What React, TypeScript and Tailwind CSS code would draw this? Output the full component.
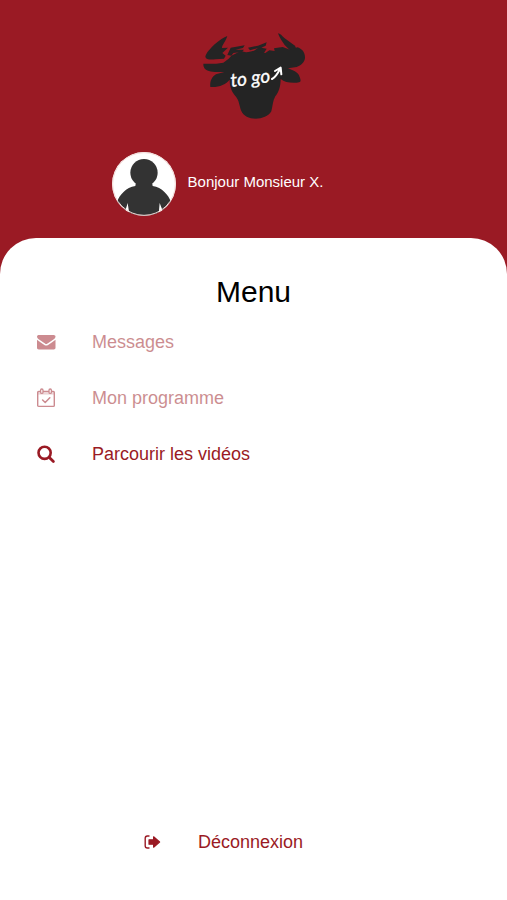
import type { ReactNode } from "react";

type MenuItem = {
  label: string;
  icon: ReactNode;
  active?: boolean;
};

function EnvelopeIcon() {
  return (
    <svg viewBox="0 0 20 20" className="size-5" fill="currentColor" aria-hidden="true">
      <path d="M1 4.500 C1 3.500 2 3 3 3 H17 C18.500 3 19.500 3.500 19.500 4.500 C19.500 5.700 18.800 6.500 17.800 7.200 L12.300 11 C11.500 11.500 11 12 10.200 12 C9.500 12 9 11.500 8.200 11 L2.700 7.200 C1.800 6.600 1 5.500 1 4.500 Z" />
      <path d="M1 7.700 C3 9.300 5 10.500 7.300 12.200 C8.300 12.900 9.200 13.500 10.200 13.500 C11.300 13.500 12.200 12.900 13.200 12.200 C15.500 10.500 17.500 9.300 19.500 7.700 V15.800 C19.500 16.900 18.700 17.500 17.800 17.500 H2.800 C1.800 17.500 1 16.900 1 15.800 Z" />
    </svg>
  );
}

function CalendarIcon() {
  return (
    <svg
      viewBox="0 0 20 20"
      className="size-5"
      fill="none"
      stroke="currentColor"
      strokeLinecap="round"
      strokeLinejoin="round"
      aria-hidden="true"
    >
      <rect x="1.700" y="3.400" width="16.600" height="15" rx="1" strokeWidth="1.400" />
      <path d="M1.700 3.400 H18.300 V6.600 H1.700 Z" fill="currentColor" fillOpacity="0.350" stroke="none" />
      <rect x="4.600" y="1" width="2.400" height="4.400" rx="1.200" fill="white" strokeWidth="1.300" />
      <rect x="13" y="1" width="2.400" height="4.400" rx="1.200" fill="white" strokeWidth="1.300" />
      <path d="M6.600 12 L9.200 14.500 L13.800 9.800" strokeWidth="1.500" />
    </svg>
  );
}

function SearchIcon() {
  return (
    <svg
      viewBox="0 0 20 20"
      className="size-5"
      fill="none"
      stroke="currentColor"
      strokeLinecap="round"
      aria-hidden="true"
    >
      <circle cx="8.600" cy="8.800" r="6.100" strokeWidth="2.600" />
      <path d="M13.600 13.800 L17.400 17.600" strokeWidth="2.800" />
    </svg>
  );
}

function SignOutIcon() {
  return (
    <svg viewBox="0 0 18 16" className="h-4 w-[18px]" aria-hidden="true">
      <path
        d="M5 2 H3.400 C2 2 1.200 2.900 1.200 4.200 V11.800 C1.200 13.100 2 14 3.400 14 H5"
        fill="none"
        stroke="currentColor"
        strokeWidth="1.400"
        strokeLinecap="round"
      />
      <path
        d="M5 5.800 H9.600 V2.800 L15.600 8 L9.600 13.200 V10.200 H5 Z"
        fill="currentColor"
        stroke="currentColor"
        strokeWidth="1.200"
        strokeLinejoin="round"
      />
    </svg>
  );
}

const items: MenuItem[] = [
  { label: "Messages", icon: <EnvelopeIcon /> },
  { label: "Mon programme", icon: <CalendarIcon /> },
  { label: "Parcourir les vidéos", icon: <SearchIcon />, active: true },
];

function Logo() {
  return (
    <svg viewBox="-4 -1 360 300" className="h-[100px] w-[120px]" role="img" aria-label="to go">
      <g fill="#242424">
        {/* Horns */}
        <path d="M96 35 C86 38 72 48 58 60 C46 72 32 86 30 97 C32 107 46 106 60 105 L86 103 L91 94 L81 86 L98 70 L80 71 C80 62 92 50 96 35 Z" />
        <path d="M248 27 C254 28 260 34 268 42 L299 64 L304 76 L286 80 L268 62 C260 50 252 40 248 27 Z" />
        {/* Brush strokes between the horns */}
        <path d="M106 70 L148 63 L143 71 L120 76 L146 76 L140 83 L114 86 L108 94 L96 92 Z" />
        <path d="M158 70 L188 64 L214 54 L211 64 L198 70 L214 73 L206 86 L160 92 L156 84 L176 79 L188 71 L164 78 Z" />
        {/* Head */}
        <path d="M24 118 C44 119 62 119 84 115 L100 103 L108 94 L120 88 L136 80 L152 84 L182 82 L210 86 L222 78 L238 80 L236 72 L262 68 L284 76 L306 69 C320 73 329 84 329 98 C330 112 318 123 304 128 L278 132 C292 137 308 144 311 153 C314 162 318 168 314 173 C296 178 270 176 256 164 C256 186 250 204 240 216 C232 230 232 246 228 261 C220 276 200 283 181 283 C161 283 144 275 138 260 C132 245 132 230 122 217 C110 204 103 188 103 166 C92 180 70 190 45 188 C43 174 48 158 62 150 L87 143 C62 144 38 143 29 134 C25 129 24 124 24 118 Z" />
      </g>
      <text
        x="108"
        y="188"
        transform="rotate(-7 108 188)"
        fill="#ffffff"
        stroke="#ffffff"
        strokeWidth="1"
        fontSize="57"
        fontStyle="italic"
        fontFamily="Lato, sans-serif"
      >
        to go
      </text>
      <path
        d="M230 164 C238 160 246 150 254 134 M239 140 L256 130 L258 150"
        fill="none"
        stroke="#ffffff"
        strokeWidth="6"
        strokeLinecap="round"
        strokeLinejoin="round"
      />
    </svg>
  );
}

function Avatar() {
  return (
    <svg viewBox="0 0 192 192" className="size-16 rounded-full bg-white" aria-hidden="true">
      <g fill="#333333">
        <circle cx="96" cy="62" r="41" />
        <path d="M72 90 H120 L122 102 C150 106 170 130 176 148 L152 176 L143 153 L140 186 L96 191 L52 186 L47 153 L40 176 L16 148 C22 130 42 106 70 102 Z" />
      </g>
      <circle cx="96" cy="96" r="94" fill="none" stroke="#f3dcd9" strokeWidth="3" />
    </svg>
  );
}

export default function App() {
  return (
    <div className="flex min-h-screen flex-col bg-[#9a1a24] font-['Liberation_Sans',Arial,sans-serif]">
      <header className="flex flex-col items-center pt-6 pb-[22px]">
        <Logo />
        <div className="mt-7 flex w-full items-center gap-3 pl-[22%]">
          <Avatar />
          <p className="pb-1 text-[15px] leading-5 text-white">Bonjour Monsieur X.</p>
        </div>
      </header>

      <main className="flex flex-1 flex-col rounded-t-[36px] bg-white pt-9 pb-11">
        <h1 className="text-center text-[30px] leading-9 text-black">Menu</h1>

        <nav className="mt-[18px] px-9">
          <ul className="flex flex-col gap-7">
            {items.map(({ label, icon, active }) => (
              <li key={label}>
                <a
                  href="#"
                  className={`flex items-center gap-9 text-lg text-[#9a1a24] ${active ? "" : "opacity-50"}`}
                >
                  {icon}
                  {label}
                </a>
              </li>
            ))}
          </ul>
        </nav>

        <button
          type="button"
          className="mt-auto flex items-center gap-9 self-center pr-[60px] text-lg text-[#9a1a24]"
        >
          <SignOutIcon />
          Déconnexion
        </button>
      </main>
    </div>
  );
}
